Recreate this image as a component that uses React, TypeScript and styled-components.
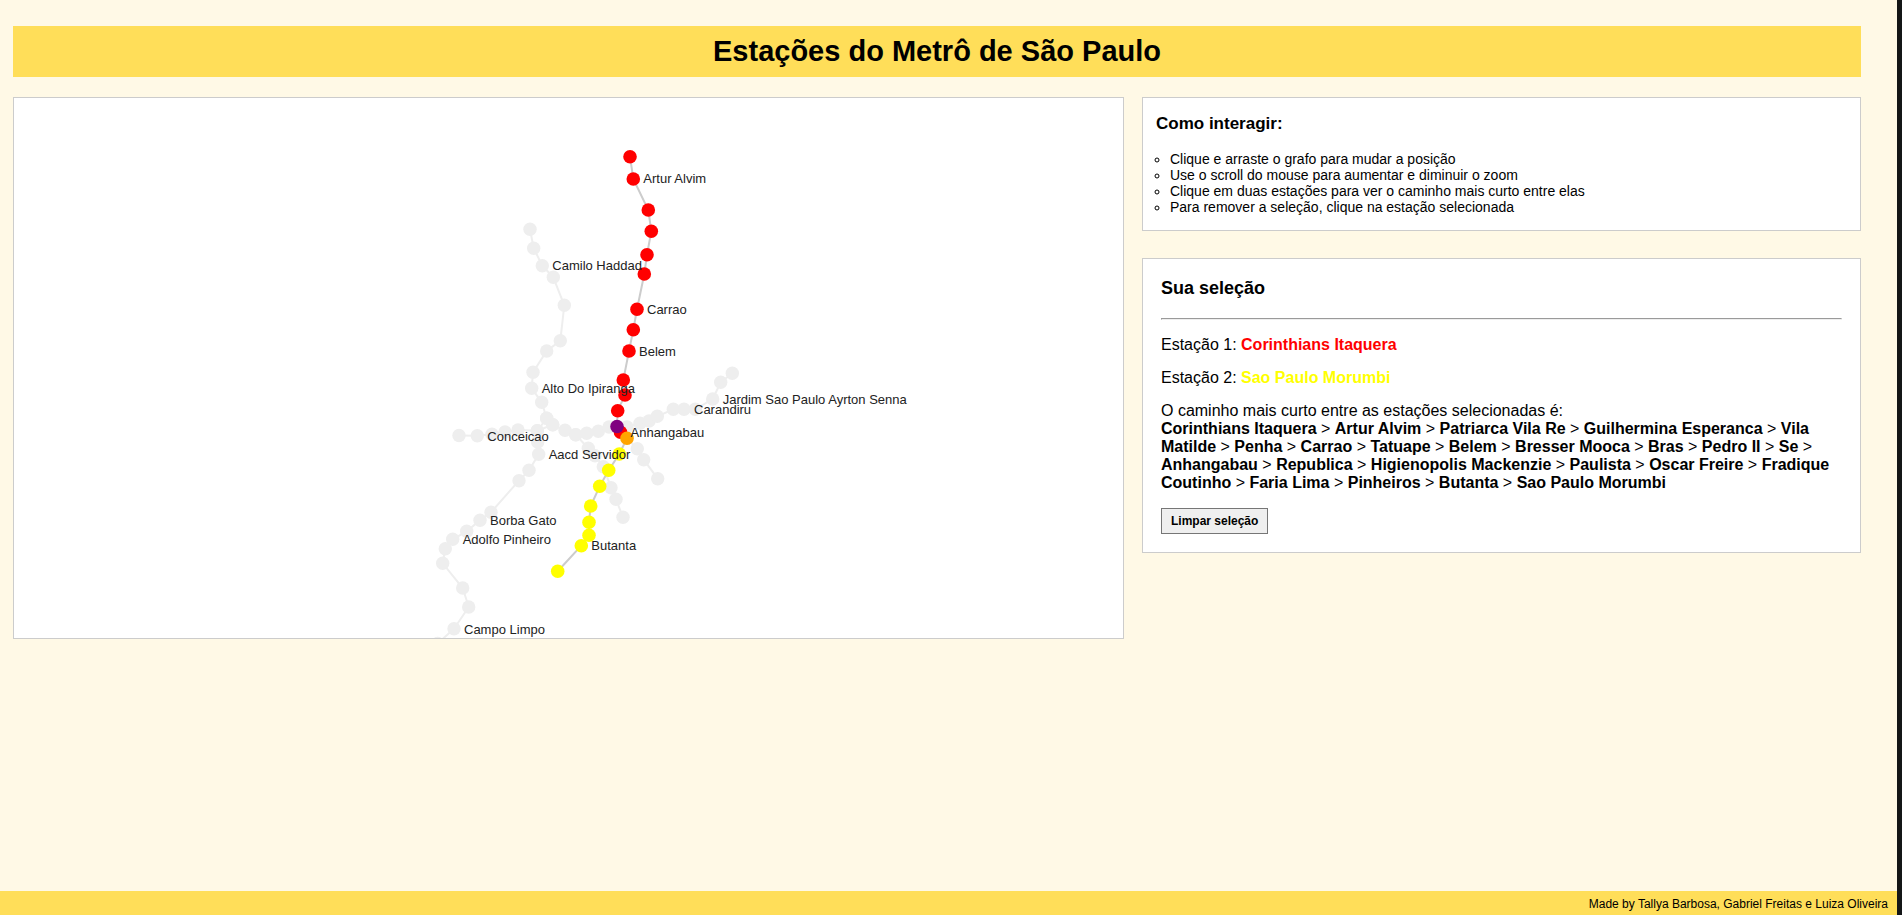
import React, { useState } from "react";
import styled, { createGlobalStyle } from "styled-components";

const GlobalStyle = createGlobalStyle`
  * { box-sizing: border-box; }
  body {
    margin: 0;
    background: #fff9e6;
    color: #000;
    font-family: "Liberation Sans", Arial, sans-serif;
    font-size: 16px;
    line-height: 18px;
  }
`;

const Page = styled.div`
  display: flex;
  flex-direction: column;
  min-height: 100vh;
  border-right: 5px solid #141617;
`;

const Main = styled.main`
  flex: 1;
  padding: 26px 36px 26px 13px;
`;

const Title = styled.h1`
  margin: 0 0 20px;
  padding: 8px;
  background: #ffde59;
  font-size: 29px;
  line-height: 35px;
  text-align: center;
`;

const Columns = styled.div`
  display: grid;
  grid-template-columns: 1111fr 719fr;
  gap: 18px;
  align-items: start;
`;

const Panel = styled.section<{ $padding?: string }>`
  min-width: 0;
  padding: ${(p) => p.$padding ?? "0"};
  background: #fff;
  border: 1px solid #ccc;
`;

const Sidebar = styled.div`
  display: flex;
  flex-direction: column;
  gap: 27px;
  min-width: 0;
`;

const Graph = styled.svg`
  display: block;
  width: 100%;
  height: 540px;
  overflow: hidden;
  cursor: grab;
`;

const Label = styled.text`
  fill: #222;
  font-size: 13px;
`;

const HelpTitle = styled.h2`
  margin: 0 0 18px;
  font-size: 17px;
  line-height: 19px;
`;

const HelpList = styled.ul`
  margin: 0;
  padding-left: 14px;
  list-style: circle;
  font-size: 14px;
  line-height: 16px;
`;

const SelectionTitle = styled.h2`
  margin: 0 0 19px;
  font-size: 18px;
  line-height: 22px;
`;

const Divider = styled.hr`
  margin: 0 0 16px;
`;

const StationLine = styled.p`
  margin: 0 0 16px;
  line-height: 17px;
`;

const PathText = styled.p`
  margin: 0 0 16px;
`;

const Station = styled.strong<{ $color: string }>`
  color: ${(p) => p.$color};
`;

const ClearButton = styled.button`
  padding: 4px 9px;
  background: #efefef;
  border: 1px solid #767676;
  border-radius: 0;
  color: #000;
  font-family: inherit;
  font-size: 12px;
  line-height: 16px;
  font-weight: bold;
`;

const Footer = styled.footer`
  padding: 5px 9px 3px;
  background: #ffde59;
  font-size: 12px;
  line-height: 16px;
  text-align: right;
`;

type Point = [number, number];

const OFF = "#eeeeee";

/* Lines outside the chosen path */
const idleLines: Point[][] = [
  [[530, 229.3], [533.7, 248.3], [542.3, 265.7], [553.3, 277.3], [564.3, 305.3], [560.3, 340.7], [546.7, 351], [533, 372.3], [531.7, 388.3], [541.7, 402.3], [546.7, 418.3], [552.7, 424.7], [565, 430.3], [575.7, 434.7], [586.7, 433.3], [598.3, 431.3], [609, 427]],
  [[459, 435.5], [477.3, 435.7], [492, 434.3], [505, 432], [518, 430], [537.3, 430.7], [552.7, 424.7]],
  [[546.7, 418.3], [537.3, 430.7], [537.7, 442], [538.7, 454.3], [529, 470.3], [519, 480.7], [491, 512.3], [480, 520.3], [466.7, 531.3], [452.7, 539.3], [445.3, 548.7], [442.7, 563.3], [462.7, 588], [468.7, 607], [454, 628.7], [437.7, 643.5]],
  [[617, 426.7], [627, 427], [640, 423.3], [649, 421], [657.3, 416.3], [673.3, 409.3], [684, 409.3], [695.3, 409.3], [712.7, 399], [720.7, 382.3], [732.3, 373.3]],
  [[575.7, 434.7], [588.3, 448.3], [595, 455.7], [603.3, 466.7], [611, 487.7], [616, 499.3], [623, 517.3]],
  [[627, 438.3], [637.3, 448.7], [643.7, 459.7], [657.7, 478.7]],
];

const path: { at: Point; color: string; name: string }[] = [
  { at: [630, 156.7], color: "red", name: "Corinthians Itaquera" },
  { at: [633.3, 179], color: "red", name: "Artur Alvim" },
  { at: [648.3, 210], color: "red", name: "Patriarca Vila Re" },
  { at: [651.3, 231.3], color: "red", name: "Guilhermina Esperanca" },
  { at: [647, 254.7], color: "red", name: "Vila Matilde" },
  { at: [644.3, 274], color: "red", name: "Penha" },
  { at: [637, 309.3], color: "red", name: "Carrao" },
  { at: [633.3, 329.7], color: "red", name: "Tatuape" },
  { at: [629, 351], color: "red", name: "Belem" },
  { at: [623.3, 380], color: "red", name: "Bresser Mooca" },
  { at: [625, 395], color: "red", name: "Bras" },
  { at: [617.7, 410.7], color: "red", name: "Pedro II" },
  { at: [617, 426.5], color: "purple", name: "Se" },
  { at: [620.5, 432.3], color: "red", name: "Anhangabau" },
  { at: [627, 438.3], color: "orange", name: "Republica" },
  { at: [619.3, 454], color: "yellow", name: "Higienopolis Mackenzie" },
  { at: [608.7, 470.3], color: "yellow", name: "Paulista" },
  { at: [599.7, 486.3], color: "yellow", name: "Oscar Freire" },
  { at: [590.7, 506], color: "yellow", name: "Fradique Coutinho" },
  { at: [589, 522.3], color: "yellow", name: "Faria Lima" },
  { at: [589, 535.3], color: "yellow", name: "Pinheiros" },
  { at: [581.3, 545.7], color: "yellow", name: "Butanta" },
  { at: [557.7, 571.3], color: "yellow", name: "Sao Paulo Morumbi" },
];

/* Interchange stations are drawn over their neighbours */
const stacked = [
  ...path.filter((s) => s.color !== "purple" && s.color !== "orange"),
  ...path.filter((s) => s.color === "orange" || s.color === "purple"),
];

const labels: { text: string; at: Point }[] = [
  { text: "Artur Alvim", at: [633.3, 179] },
  { text: "Camilo Haddad", at: [542.3, 266] },
  { text: "Carrao", at: [637, 310] },
  { text: "Belem", at: [629, 352] },
  { text: "Alto Do Ipiranga", at: [531.7, 389] },
  { text: "Jardim Sao Paulo Ayrton Senna", at: [712.7, 400] },
  { text: "Carandiru", at: [684, 410] },
  { text: "Anhangabau", at: [620.5, 433] },
  { text: "Conceicao", at: [477.3, 437] },
  { text: "Aacd Servidor", at: [538.7, 455] },
  { text: "Borba Gato", at: [480, 521] },
  { text: "Adolfo Pinheiro", at: [452.7, 540] },
  { text: "Butanta", at: [581.3, 546] },
  { text: "Campo Limpo", at: [454, 630] },
];

const toPoints = (pts: Point[]) => pts.map((p) => p.join(",")).join(" ");

function MetroMap() {
  return (
    <Graph role="img" aria-label="Grafo das estações do metrô">
      <g transform="translate(-14 -98)">
        {idleLines.map((line, i) => (
          <polyline key={i} points={toPoints(line)} fill="none" stroke={OFF} strokeWidth={2} />
        ))}
        <polyline points={toPoints(path.map((s) => s.at))} fill="none" stroke="#ccc" strokeWidth={2} />
        {idleLines.flatMap((line, i) =>
          line.map(([x, y], j) => <circle key={`${i}-${j}`} cx={x} cy={y} r={6.7} fill={OFF} />)
        )}
        {stacked.map((s) => (
          <circle key={s.name} cx={s.at[0]} cy={s.at[1]} r={6.8} fill={s.color} />
        ))}
        {labels.map((l) => (
          <Label key={l.text} x={l.at[0] + 10} y={l.at[1] + 4}>
            {l.text}
          </Label>
        ))}
      </g>
    </Graph>
  );
}

export default function App() {
  const [cleared, setCleared] = useState(false);
  const first = path[0];
  const last = path[path.length - 1];

  return (
    <Page>
      <GlobalStyle />
      <Main>
        <Title>Estações do Metrô de São Paulo</Title>
        <Columns>
          <Panel>
            <MetroMap />
          </Panel>
          <Sidebar>
            <Panel $padding="16px 13px 15px">
              <HelpTitle>Como interagir:</HelpTitle>
              <HelpList>
                <li>Clique e arraste o grafo para mudar a posição</li>
                <li>Use o scroll do mouse para aumentar e diminuir o zoom</li>
                <li>Clique em duas estações para ver o caminho mais curto entre elas</li>
                <li>Para remover a seleção, clique na estação selecionada</li>
              </HelpList>
            </Panel>
            <Panel $padding="18px">
              <SelectionTitle>Sua seleção</SelectionTitle>
              <Divider />
              {!cleared && (
                <>
                  <StationLine>
                    Estação 1: <Station $color={first.color}>{first.name}</Station>
                  </StationLine>
                  <StationLine>
                    Estação 2: <Station $color={last.color}>{last.name}</Station>
                  </StationLine>
                  <PathText>
                    O caminho mais curto entre as estações selecionadas é:
                    <br />
                    {path.map((s, i) => (
                      <React.Fragment key={s.name}>
                        {i > 0 && " > "}
                        <b>{s.name}</b>
                      </React.Fragment>
                    ))}
                  </PathText>
                </>
              )}
              <ClearButton type="button" onClick={() => setCleared(true)}>
                Limpar seleção
              </ClearButton>
            </Panel>
          </Sidebar>
        </Columns>
      </Main>
      <Footer>Made by Tallya Barbosa, Gabriel Freitas e Luiza Oliveira</Footer>
    </Page>
  );
}
